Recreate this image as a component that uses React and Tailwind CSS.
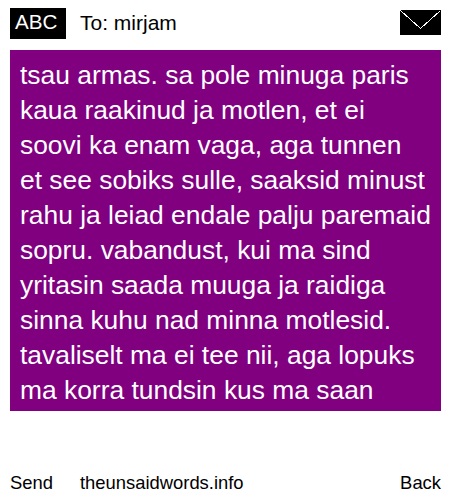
export default function App() {
  const lines = [
    "tsau armas. sa pole minuga paris",
    "kaua raakinud ja motlen, et ei",
    "soovi ka enam vaga, aga tunnen",
    "et see sobiks sulle, saaksid minust",
    "rahu ja leiad endale palju paremaid",
    "sopru. vabandust, kui ma sind",
    "yritasin saada muuga ja raidiga",
    "sinna kuhu nad minna motlesid.",
    "tavaliselt ma ei tee nii, aga lopuks",
    "ma korra tundsin kus ma saan",
  ];

  return (
    <div className="w-[450px] h-[500px] bg-white text-black flex flex-col font-['Liberation_Sans',Arial,sans-serif] overflow-hidden">
      {/* Header */}
      <div className="flex items-center h-[31px] mt-2 ml-2.5 mr-[9px]">
        <div className="w-14 h-[31px] bg-black text-white text-[20.6px] pl-[5px] pb-[2px] flex items-center">ABC</div>
        <div className="ml-[14px] text-[21px] pb-[2px]">To: mirjam</div>
        <svg className="ml-auto mb-[2px]" width="41" height="25" viewBox="0 0 41 25" shapeRendering="crispEdges">
          <rect width="41" height="25" fill="#000" />
          <path d="M0.5 0.5 L20.5 18.5 L40.5 0.5" fill="none" stroke="#fff" strokeWidth="1" />
        </svg>
      </div>

      {/* Message */}
      <div className="mt-[11px] ml-2.5 mr-[9px] h-[361px] bg-[#800080] text-white text-[26.4px] leading-[35px] pt-[8px] pl-[10px] overflow-hidden">
        {lines.map((line) => (
          <div key={line} className="whitespace-nowrap">{line}</div>
        ))}
      </div>

      {/* Footer */}
      <div className="flex items-center mt-[62px] ml-2.5 mr-[9px] text-[18.4px] leading-[20px]">
        <span className="w-[70px]">Send</span>
        <span>theunsaidwords.info</span>
        <span className="ml-auto">Back</span>
      </div>
    </div>
  );
}
